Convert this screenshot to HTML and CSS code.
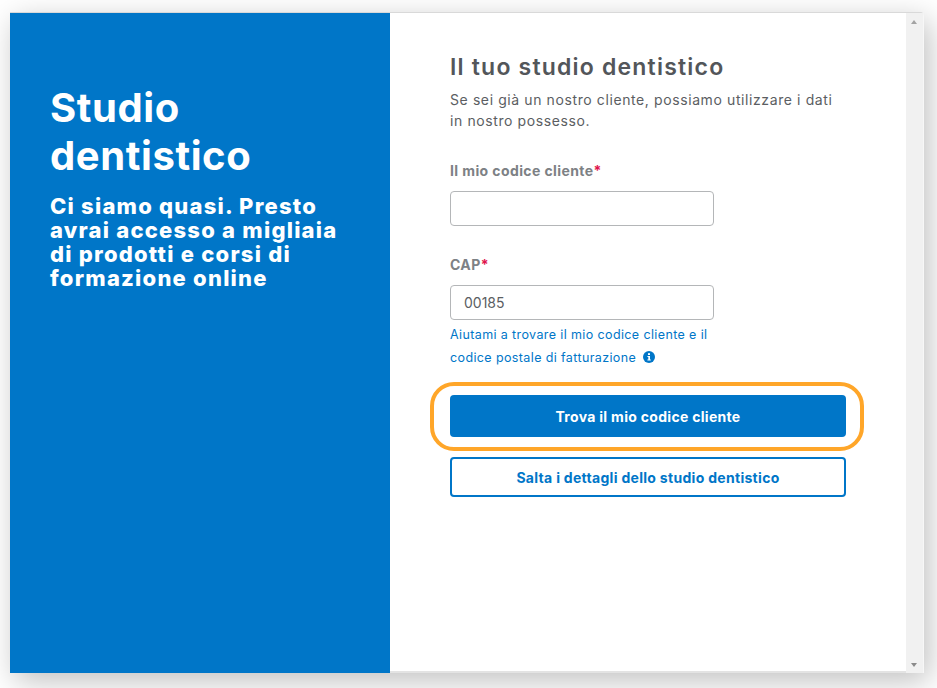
FILE: index.html
```html
<!DOCTYPE html>
<html lang="it">
<head>
    <meta charset="UTF-8">
    <title>Studio dentistico</title>
    <link rel="stylesheet" href="styles.css">
</head>
<body>
    <div class="modal">
        <div class="side">
            <h1>Studio dentistico</h1>
            <p>Ci siamo quasi. Presto avrai accesso a migliaia di prodotti e corsi di formazione online</p>
        </div>
        <div class="content">
            <h2>Il tuo studio dentistico</h2>
            <p class="intro">Se sei già un nostro cliente, possiamo utilizzare i dati in nostro possesso.</p>

            <label class="field-label" for="code">Il mio codice cliente<span class="req">*</span></label>
            <input class="field" type="text" id="code">

            <label class="field-label cap-label" for="cap">CAP<span class="req">*</span></label>
            <input class="field" type="text" id="cap" value="00185">

            <a class="help" href="#">Aiutami a trovare il mio codice cliente e il codice postale di fatturazione
                <svg class="info" viewBox="0 0 12 12" width="12" height="12">
                    <circle cx="6" cy="6" r="6" fill="#0076c8"/>
                    <rect x="5" y="2.2" width="2" height="1.8" fill="#fff"/>
                    <path d="M4.4 5h2.6v3.6h.8v1H4.4v-1h.9V6h-.9z" fill="#fff"/>
                </svg>
            </a>

            <div class="primary-wrap">
                <button class="btn primary">Trova il mio codice cliente</button>
                <span class="ring"></span>
            </div>
            <button class="btn secondary">Salta i dettagli dello studio dentistico</button>
        </div>
        <div class="scrollbar">
            <span class="arrow up"></span>
            <span class="arrow down"></span>
        </div>
    </div>
</body>
</html>
```

FILE: styles.css
```css
/* Page */
html, body {
    height: 100%;
}

body {
    margin: 0;
    padding: 12px 13px 15px 10px;
    box-sizing: border-box;
    background-color: #fff;
    font-family: Inter, "Liberation Sans", sans-serif;
    overflow: hidden;
}

/* Modal */
.modal {
    display: flex;
    height: 100%;
    box-sizing: border-box;
    background-color: #e3e3e3;
    border-top: 1px solid #d9d9d9;
    border-right: 1px solid #f7f7f7;
    border-radius: 0 4px 0 0;
    box-shadow: 5px 8px 30px rgba(0, 0, 0, 0.25);
}

.side {
    width: 380px;
    flex-shrink: 0;
    padding: 71px 30px 0 40px;
    box-sizing: border-box;
    background-color: #0076c8;
    color: #fff;
}

.side h1 {
    margin: 0 0 14px;
    font-size: 40px;
    line-height: 48px;
    font-weight: 700;
    letter-spacing: 0.6px;
}

.side p {
    margin: 0;
    font-size: 22px;
    line-height: 24px;
    font-weight: 800;
    letter-spacing: 1.23px;
}

/* Form */
.content {
    flex: 1;
    min-width: 0;
    margin-bottom: 2px;
    padding: 40px 60px 0;
    background-color: #fff;
}

.content h2 {
    margin: 0 0 8px;
    font-size: 23px;
    line-height: 28px;
    font-weight: 600;
    letter-spacing: 1.2px;
    color: #53565a;
}

.intro {
    margin: 0 0 31px;
    width: 390px;
    font-size: 14px;
    line-height: 21px;
    letter-spacing: 0.6px;
    color: #5b5e62;
}

.field-label {
    display: block;
    margin-bottom: 11px;
    font-size: 14px;
    line-height: 18px;
    font-weight: 700;
    letter-spacing: 0.4px;
    color: #7d8185;
}

.cap-label {
    margin-top: 30px;
}

.req {
    color: #e0144c;
}

.field {
    display: block;
    width: 264px;
    height: 35px;
    padding: 0 13px;
    box-sizing: border-box;
    border: 1px solid #b4b6b8;
    border-radius: 4px;
    font-family: inherit;
    font-size: 14px;
    color: #5b5e62;
}

.help {
    display: block;
    width: 280px;
    margin-top: 3px;
    font-size: 12.5px;
    line-height: 23px;
    letter-spacing: 0.38px;
    color: #0076c8;
    text-decoration: none;
}

.info {
    margin-left: 3px;
    vertical-align: -1px;
}

/* Buttons */
.btn {
    display: block;
    width: 396px;
    border-radius: 4px;
    font-family: inherit;
    font-size: 14px;
    font-weight: 700;
    letter-spacing: 0.3px;
}

.primary-wrap {
    position: relative;
    margin-top: 26px;
}

.primary {
    height: 42px;
    border: none;
    background-color: #0076c8;
    color: #fff;
}

.ring {
    position: absolute;
    top: -13px;
    left: -20px;
    width: 434px;
    height: 69px;
    box-sizing: border-box;
    border: 4px solid #ffa629;
    border-radius: 24px;
}

.secondary {
    height: 40px;
    margin-top: 20px;
    border: 2px solid #0076c8;
    background-color: #fff;
    color: #0076c8;
}

/* Scrollbar */
.scrollbar {
    position: relative;
    width: 17px;
    flex-shrink: 0;
    background-color: #f1f1f1;
}

.arrow {
    position: absolute;
    left: 5px;
    width: 0;
    height: 0;
    border-left: 3.5px solid transparent;
    border-right: 3.5px solid transparent;
}

.arrow.up {
    top: 7px;
    border-bottom: 4px solid #a3a3a3;
}

.arrow.down {
    bottom: 6px;
    border-top: 4px solid #8a8a8a;
}
```
